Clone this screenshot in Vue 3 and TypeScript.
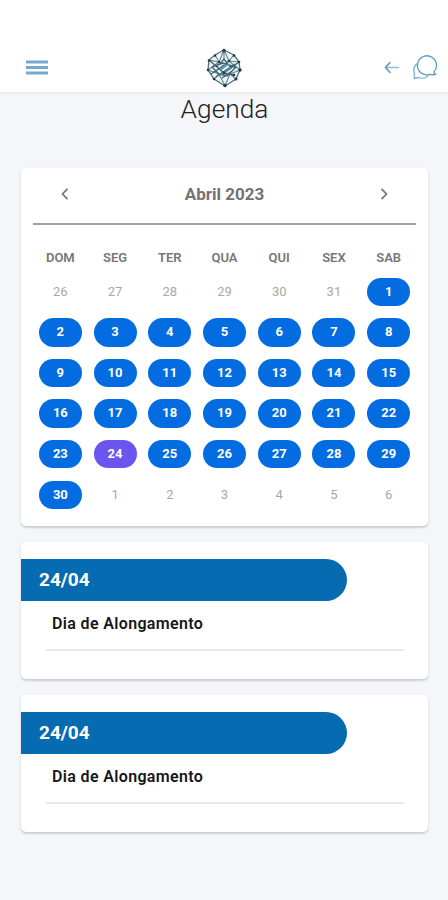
<script setup lang="ts">
interface Day {
  label: number
  kind: 'outside' | 'active' | 'today'
}

const weekdays: string[] = ['DOM', 'SEG', 'TER', 'QUA', 'QUI', 'SEX', 'SAB']

const before: Day[] = [26, 27, 28, 29, 30, 31].map((label) => ({ label, kind: 'outside' }))
const month: Day[] = Array.from({ length: 30 }, (_, i) => ({
  label: i + 1,
  kind: i + 1 === 24 ? 'today' : 'active',
}))
const after: Day[] = [1, 2, 3, 4, 5, 6].map((label) => ({ label, kind: 'outside' }))
const days: Day[] = [...before, ...month, ...after]

const events = [
  { id: 1, date: '24/04', title: 'Dia de Alongamento' },
  { id: 2, date: '24/04', title: 'Dia de Alongamento' },
]
</script>

<template>
  <div class="screen">
    <header class="topbar">
      <button class="icon-btn" aria-label="Menu">
        <svg width="22" height="16" viewBox="0 0 22 16">
          <path d="M0 2H22M0 7.5H22M0 13H22" stroke="#75a9cf" stroke-width="2.8" />
        </svg>
      </button>
      <svg class="logo" width="36" height="40" viewBox="0 0 36 40" fill="none">
        <path d="M18 2 28 7 33 14 34 22 30 31 19 38 8 31 2 22 3 12 9 7Z" fill="#eef6f9" stroke="#526f7c" stroke-width="1.3" />
        <path d="M18 2 13 14 3 12M18 2 23 13 33 14M18 2V11M9 7 13 14 6 19 2 22M28 7 23 13 30 19 34 22M8 31 13 26 19 38 24 26 30 31M13 26 2 22M24 26 34 22" stroke="#62808c" stroke-width="1.1" />
        <path d="M3 12 11 19 18 11 25 20 33 14M6 19 17 15 30 19 21 28 13 26 6 19M5 26 14 20 23 13M10 29 20 22 29 16M11 19 18 25 28 27M16 30 26 23" stroke="#416474" stroke-width="1.4" />
        <path d="m14 22 8-6M15 27l10-7" stroke="#4e8eac" stroke-width="1.8" />
        <g fill="#203c47">
          <circle cx="18" cy="2.5" r="1.7" /><circle cx="28" cy="7.5" r="1.3" /><circle cx="33" cy="14" r="1.3" />
          <circle cx="34" cy="22" r="1.7" /><circle cx="30" cy="31" r="1.5" /><circle cx="19" cy="37.5" r="1.8" />
          <circle cx="8" cy="31" r="1.3" /><circle cx="2" cy="22" r="1.3" /><circle cx="3" cy="12.5" r="1.3" />
          <circle cx="13" cy="14" r="1.2" /><circle cx="23" cy="13" r="1.3" /><circle cx="18" cy="25" r="1.4" />
          <circle cx="28" cy="27" r="1.3" /><circle cx="9" cy="7.5" r="1.2" />
        </g>
      </svg>
      <div class="actions">
        <svg width="16" height="14" viewBox="0 0 16 14" fill="none" stroke-linecap="round">
          <path d="M2 6.5H14.5" stroke="#8dbfd6" stroke-width="1.5" />
          <path d="M6 1.5 1.5 6.5 6 11.5" stroke="#5f93b5" stroke-width="1.5" />
        </svg>
        <svg width="26" height="26" viewBox="0 0 26 26" fill="none" stroke-width="1.3" stroke-linejoin="round">
          <path d="M21.8 16.9A9.5 9.5 0 1 0 18 19.3C20 19.8 22 20 23.8 19.4 22.6 18.7 22 17.9 21.8 16.9Z" stroke="#5b9abf" />
          <path d="M5.3 8.5C2 11.2 1.1 14.8 2.4 18.2L2.2 23.7 6.6 22.5C10.5 24.1 14.8 22.8 17.1 19.7" stroke="#79b2cc" />
        </svg>
      </div>
    </header>

    <main>
      <h1>Agenda</h1>

      <section class="card calendar">
        <div class="month-bar">
          <svg width="10" height="14" viewBox="0 0 10 14"><path d="M7.5 1.8 2.5 7l5 5.2" /></svg>
          <span>Abril 2023</span>
          <svg width="10" height="14" viewBox="0 0 10 14"><path d="m2.5 1.8 5 5.2-5 5.2" /></svg>
        </div>
        <div class="weekdays">
          <span v-for="name in weekdays" :key="name">{{ name }}</span>
        </div>
        <div class="days">
          <div v-for="(day, index) in days" :key="index" class="cell">
            <span class="day" :class="day.kind">{{ day.label }}</span>
          </div>
        </div>
      </section>

      <section v-for="event in events" :key="event.id" class="card event">
        <div class="event-date">{{ event.date }}</div>
        <div class="event-title">{{ event.title }}</div>
      </section>
    </main>
  </div>
</template>

<style>
body {
  margin: 0;
  background: #f4f6fa;
}
</style>

<style scoped>
.screen {
  min-height: 900px;
  box-sizing: border-box;
  background: #f4f6fa;
  font-family: Roboto, "Liberation Sans", sans-serif;
  overflow: hidden;
}
.topbar {
  height: 92px;
  box-sizing: border-box;
  padding: 43px 10px 0 25.5px;
  display: grid;
  grid-template-columns: 1fr 36px 1fr;
  align-items: center;
  background: #fff;
  box-shadow: 0 1px 3px rgba(0, 0, 0, 0.07);
}
.icon-btn {
  display: flex;
  justify-self: start;
  padding: 0;
  border: 0;
  background: none;
}
.logo {
  margin-left: -8px;
}
.topbar svg {
  display: block;
}
.actions {
  display: flex;
  justify-content: flex-end;
  align-items: center;
  gap: 12px;
}
main {
  padding: 0 20px 0 21px;
}
h1 {
  margin: 0;
  height: 76px;
  box-sizing: border-box;
  padding-top: 1px;
  line-height: 33px;
  font-size: 26.3px;
  font-weight: 300;
  text-align: center;
  color: #222;
}
.card {
  background: #fff;
  border-radius: 5px;
  box-shadow: 0 2px 2px rgba(0, 0, 0, 0.13), 0 1px 4px rgba(0, 0, 0, 0.06);
}
.calendar {
  height: 358px;
  box-sizing: border-box;
  padding: 0 12px;
}
.month-bar {
  height: 57px;
  box-sizing: border-box;
  padding: 0 27px 4px;
  display: flex;
  align-items: center;
  justify-content: space-between;
  border-bottom: 2px solid #a0a0a0;
  font-size: 17px;
  font-weight: 700;
  color: #727272;
}
.month-bar path {
  fill: none;
  stroke: #777;
  stroke-width: 1.8;
}
.weekdays,
.days {
  display: grid;
  grid-template-columns: repeat(7, 1fr);
}
.weekdays {
  height: 46.5px;
  padding-top: 23px;
  box-sizing: border-box;
  line-height: 20px;
  font-size: 13px;
  font-weight: 600;
  text-align: center;
  color: #777;
}
.days {
  grid-auto-rows: 40.6px;
}
.cell {
  display: flex;
  align-items: center;
  justify-content: center;
}
.day {
  width: 43px;
  height: 28.5px;
  line-height: 28.5px;
  border-radius: 15px;
  text-align: center;
  font-size: 13px;
}
.outside {
  color: #a8a8a8;
}
.active,
.today {
  background: #026ce0;
  color: #fff;
  font-weight: 700;
}
.today {
  background: #6a55ef;
}
.event {
  height: 137px;
  margin-top: 16px;
  padding-top: 17px;
  box-sizing: border-box;
}
.event-date {
  width: 326px;
  height: 42px;
  box-sizing: border-box;
  padding-left: 18px;
  border-radius: 0 21px 21px 0;
  background: #076bb1;
  color: #fff;
  font-size: 19px;
  font-weight: 700;
  line-height: 42px;
}
.event-title {
  margin: 0 24px 0 25px;
  padding-left: 6px;
  height: 50px;
  box-sizing: border-box;
  line-height: 46px;
  border-bottom: 2px solid #e9e9e9;
  font-size: 16px;
  letter-spacing: 0.35px;
  font-weight: 600;
  color: #171717;
}
</style>
